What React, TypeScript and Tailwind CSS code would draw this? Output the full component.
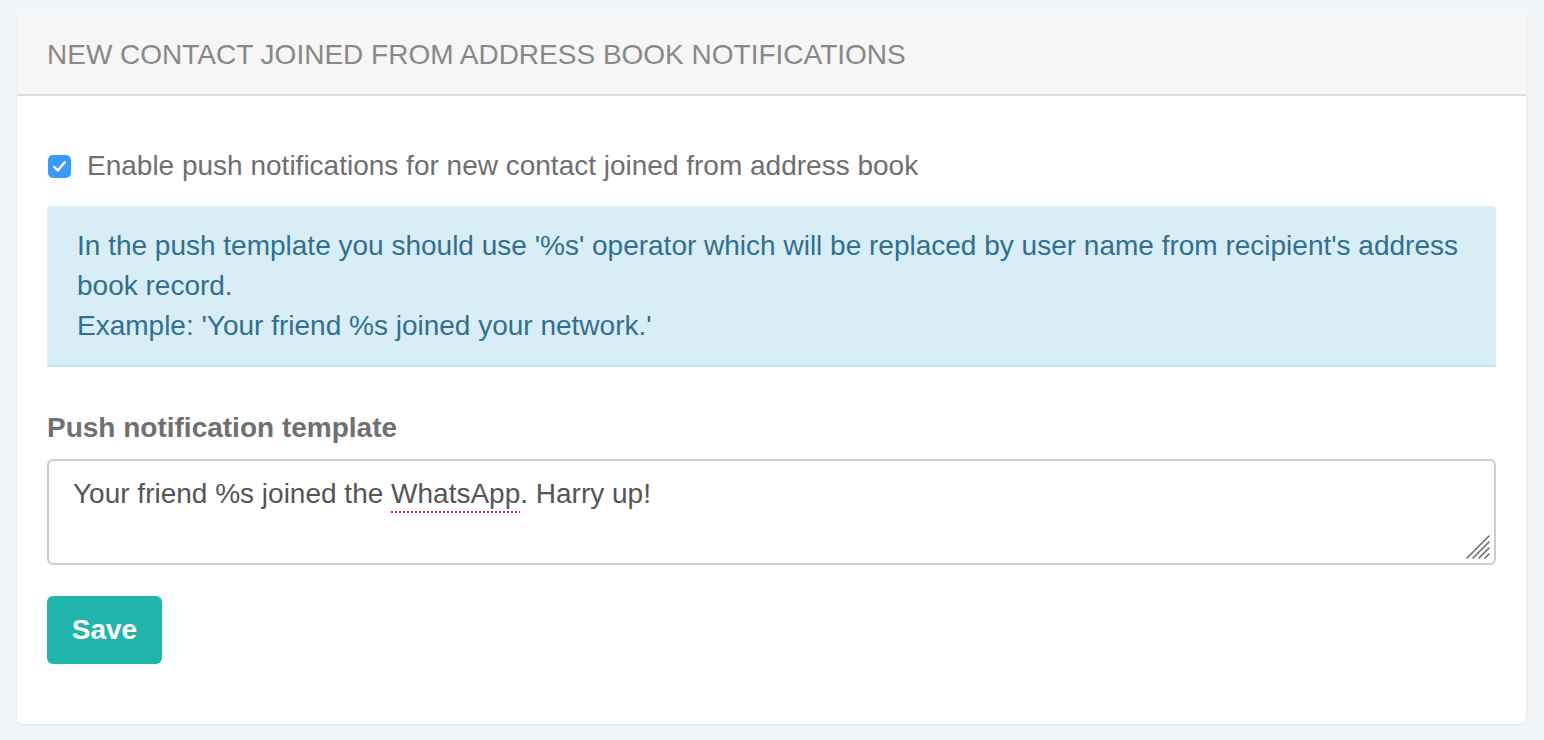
import React from "react";

const font = { fontFamily: '"Liberation Sans", Arial, sans-serif' };

const CheckBox: React.FC = () => (
  <span className="ml-[1px] flex h-[23px] w-[23px] shrink-0 items-center justify-center rounded-[5px] bg-[#3b99fc]">
    <svg width="19" height="19" viewBox="0 0 16 16" fill="none">
      <path d="M3.6 8.4l2.9 3 5.9-7" stroke="white" strokeWidth="2" strokeLinecap="round" strokeLinejoin="round" />
    </svg>
  </span>
);

const ResizeGrip: React.FC = () => (
  <svg className="absolute bottom-[3px] right-[3px]" width="26" height="26" viewBox="0 0 26 26">
    <g stroke="#6b6b6b" strokeWidth="1.6" strokeLinecap="round">
      <line x1="2" y1="24" x2="24" y2="2" />
      <line x1="8" y1="24" x2="24" y2="8" />
      <line x1="14" y1="24" x2="24" y2="14" />
      <line x1="20" y1="24" x2="24" y2="20" />
    </g>
  </svg>
);

export default function App() {
  return (
    <div className="min-h-[740px] bg-[#f2f5f8] pl-[17px] pr-[18px] pt-[14px]" style={font}>
      <div className="h-[710px] rounded-[6px] bg-white shadow-[0_1px_3px_rgba(0,0,0,0.06)]">
        {/* Header */}
        <div className="flex h-[82px] items-center rounded-t-[6px] border-b-2 border-[#dddddd] bg-[#f6f6f6] px-[30px] pt-[2px]">
          <h2 className="text-[28px] uppercase leading-[40px] text-[#888888]">
            New contact joined from address book notifications
          </h2>
        </div>

        {/* Body */}
        <div className="px-[30px] pt-[50px]">
          <label className="flex items-center gap-[16px] text-[28px] leading-[40px] text-[#6f6f6f]">
            <CheckBox />
            Enable push notifications for new contact joined from address book
          </label>

          <div className="mt-[20px] rounded-t-[4px] border-b-2 border-[#bce8f1] bg-[#d9edf7] px-[30px] pb-[19px] pt-[20px] text-[28px] leading-[40px] text-[#31708f]">
            In the push template you should use '%s' operator which will be replaced by user name from recipient's address book record.
            <br />
            Example: 'Your friend %s joined your network.'
          </div>

          <div className="mt-[41px] text-[28px] font-bold leading-[40px] text-[#707070]">
            Push notification template
          </div>

          <div className="relative mt-[11px] h-[106px] rounded-[6px] border-2 border-[#cccccc] pl-[24px] pt-[13px] text-[28px] leading-[40px] text-[#555555]">
            Your friend %s joined the{" "}
            <span className="underline decoration-[#e02020] decoration-dotted decoration-2 underline-offset-[8px]">WhatsApp</span>. Harry up!
            <ResizeGrip />
          </div>

          <button className="mt-[31px] h-[68px] w-[115px] rounded-[6px] bg-[#20b5aa] text-[28px] font-bold text-white">
            Save
          </button>
        </div>
      </div>
    </div>
  );
}
